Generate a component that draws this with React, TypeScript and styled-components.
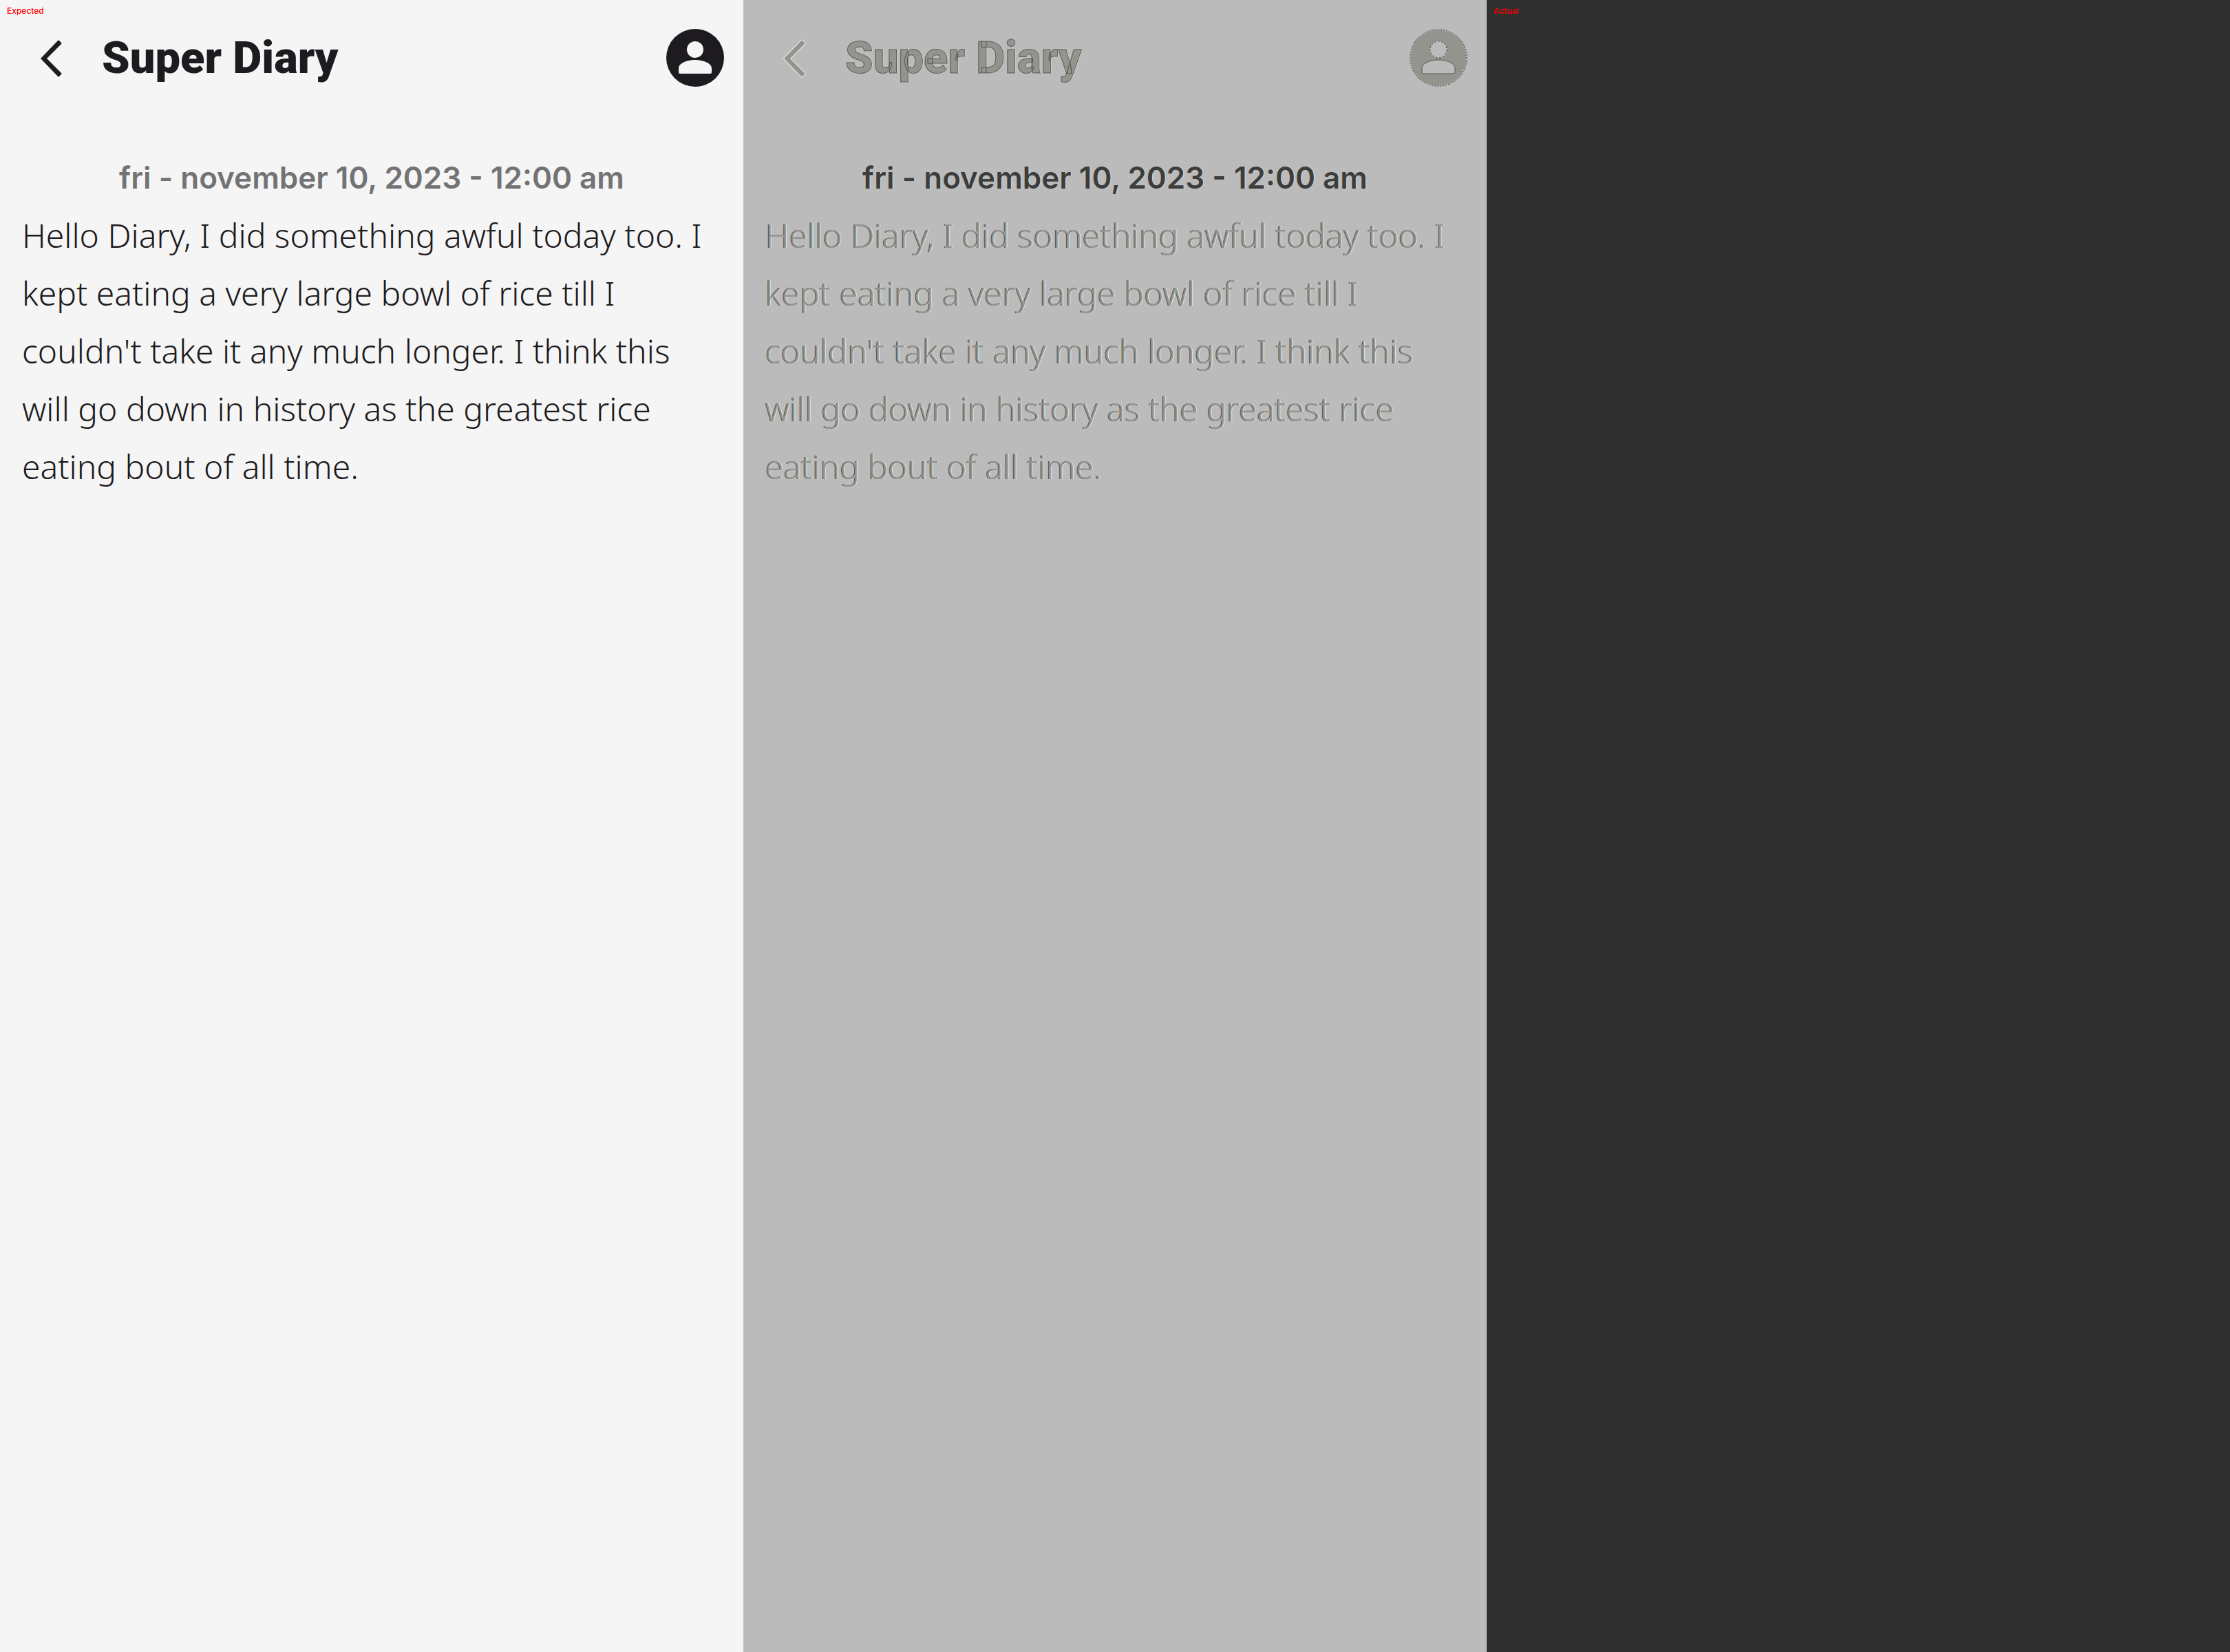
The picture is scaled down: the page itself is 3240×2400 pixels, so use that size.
import React from "react";
import styled, { createGlobalStyle, css } from "styled-components";

type Variant = "plain" | "diff";

const palette = {
  plain: { surface: "#f5f5f5", ink: "#1d1b20", muted: "#737375" },
  diff: { surface: "#bbbbbb", ink: "#92948d", muted: "#3d3d3b" },
};

const GlobalStyle = createGlobalStyle`
  *, *::before, *::after { box-sizing: border-box; }
  body { margin: 0; background: #303030; }
`;

const Comparison = styled.main`
  display: grid;
  grid-template-columns: repeat(3, 1fr);
  min-height: 100vh;
`;

const Panel = styled.section<{ $background: string }>`
  position: relative;
  min-width: 0;
  background: ${(p) => p.$background};
`;

const PanelLabel = styled.span`
  position: absolute;
  top: 8px;
  left: 10px;
  color: #ff0000;
  font: 500 12px/16px Inter, sans-serif;
`;

const AppBar = styled.header`
  display: flex;
  align-items: center;
  height: 168px;
  padding: 0 28px 0 32px;
`;

const IconButton = styled.button`
  display: flex;
  padding: 0;
  border: 0;
  background: none;
`;

const Title = styled.h1<{ $variant: Variant }>`
  flex: 1;
  margin: 0;
  padding-left: 32px;
  color: ${(p) => palette[p.$variant].ink};
  font: 900 65px/84px Roboto, sans-serif;
  ${(p) =>
    p.$variant === "diff" &&
    css`
      -webkit-text-stroke: 1px rgba(40, 40, 38, 0.6);
      text-shadow: 1px 0 0 rgba(255, 255, 255, 0.6);
    `}
`;

const Entry = styled.article`
  padding: 48px 32px 0;
`;

const EntryDate = styled.h2<{ $variant: Variant }>`
  margin: 0;
  color: ${(p) => palette[p.$variant].muted};
  font: 600 44px/84px Inter, sans-serif;
  text-align: center;
  ${(p) =>
    p.$variant === "diff" &&
    css`
      text-shadow: 1px 0 0 rgba(255, 255, 255, 0.5);
    `}
`;

const EntryText = styled.p<{ $variant: Variant }>`
  margin: 0;
  color: ${(p) => palette[p.$variant].ink};
  font: 300 48px/84px "Noto Sans", sans-serif;
  ${(p) =>
    p.$variant === "diff" &&
    css`
      text-shadow: 1px 0 0 rgba(255, 255, 255, 0.7), -1px 0 0 rgba(20, 20, 18, 0.7);
    `}
`;

const BackIcon = ({ variant }: { variant: Variant }) => {
  const d = "M27 44 L52 18 Q53 17 54 18 L57 21 Q58 22 57 23 L36 44 L57 65 Q58 66 57 67 L54 70 Q53 71 52 70 Z";
  return (
    <svg width="84" height="84" viewBox="0 1 84 84" aria-hidden="true">
      {variant === "diff" && <path d={d} fill="none" stroke="#f0f0f0" strokeWidth="2" />}
      <path d={d} fill={palette[variant].ink} />
    </svg>
  );
};

const AccountIcon = ({ variant }: { variant: Variant }) => {
  const { ink, surface } = palette[variant];
  const body = "M18 63 V57 C18 50 30 45 42 45 C54 45 66 50 66 57 V63 Q66 65 64 65 H20 Q18 65 18 63 Z";
  return (
    <svg width="84" height="84" viewBox="0 0 84 84" aria-hidden="true">
      <circle cx="42" cy="42" r="42" fill={ink} />
      <circle cx="42" cy="30" r="12" fill={surface} />
      <path d={body} fill={surface} />
      {variant === "diff" && (
        <g fill="none" strokeWidth="1">
          <circle cx="42" cy="42" r="41" stroke="#d8d8d8" />
          <circle cx="42" cy="42" r="41" stroke="#333333" strokeDasharray="2 2" />
          <circle cx="42" cy="30" r="12" stroke="#e0e0e0" />
          <circle cx="42" cy="30" r="12" stroke="#333333" strokeDasharray="3 2" />
          <path d={body} stroke="#55554f" />
        </g>
      )}
    </svg>
  );
};

const DiaryScreen = ({ variant }: { variant: Variant }) => (
  <>
    <AppBar>
      <IconButton type="button" aria-label="Back">
        <BackIcon variant={variant} />
      </IconButton>
      <Title $variant={variant}>Super Diary</Title>
      <IconButton type="button" aria-label="Account">
        <AccountIcon variant={variant} />
      </IconButton>
    </AppBar>
    <Entry>
      <EntryDate $variant={variant}>fri - november 10, 2023 - 12:00 am</EntryDate>
      <EntryText $variant={variant}>
        Hello Diary, I did something awful today too. I kept eating a very large bowl of rice till I
        couldn't take it any much longer. I think this will go down in history as the greatest rice
        eating bout of all time.
      </EntryText>
    </Entry>
  </>
);

export default function App() {
  return (
    <>
      <GlobalStyle />
      <Comparison>
        <Panel $background={palette.plain.surface}>
          <PanelLabel>Expected</PanelLabel>
          <DiaryScreen variant="plain" />
        </Panel>
        <Panel $background={palette.diff.surface}>
          <DiaryScreen variant="diff" />
        </Panel>
        <Panel $background="#303030">
          <PanelLabel>Actual</PanelLabel>
        </Panel>
      </Comparison>
    </>
  );
}
